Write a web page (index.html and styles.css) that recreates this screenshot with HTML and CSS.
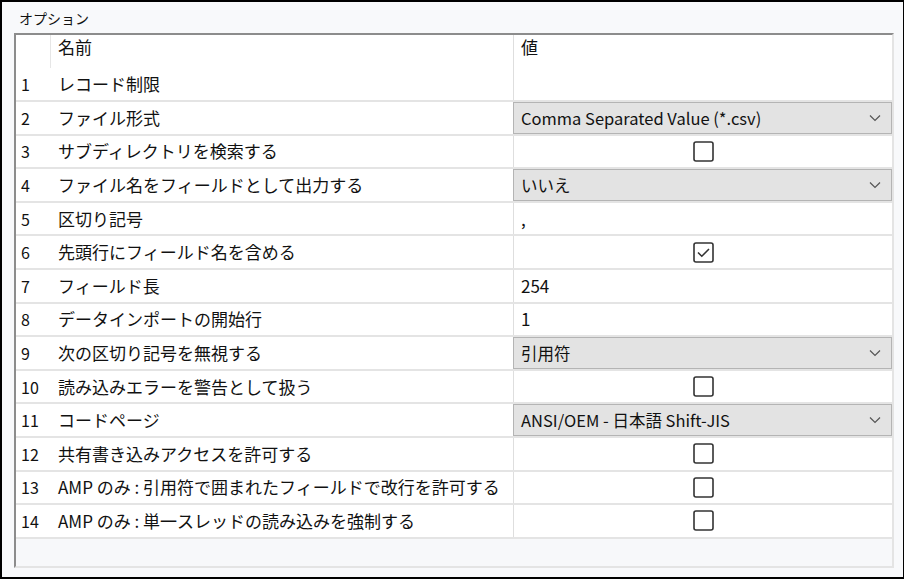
FILE: index.html
```html
<!DOCTYPE html>
<html lang="ja">
<head>
<meta charset="utf-8">
<title>オプション</title>
<link rel="stylesheet" href="styles.css">
</head>
<body>
<div class="window">
  <div class="title">オプション</div>
  <div class="grid">
    <div class="row head">
      <div class="num"></div>
      <div class="name">名前</div>
      <div class="val">値</div>
    </div>
    <div class="row first">
      <div class="num">1</div>
      <div class="name">レコード制限</div>
      <div class="val"></div>
    </div>
    <div class="row">
      <div class="num">2</div>
      <div class="name">ファイル形式</div>
      <div class="val combo"><span>Comma Separated Value (*.csv)</span><svg class="chev" width="12" height="8" viewBox="0 0 12 8"><path d="M1 1.5 L6 6.5 L11 1.5" fill="none" stroke="#555" stroke-width="1.2"/></svg></div>
    </div>
    <div class="row">
      <div class="num">3</div>
      <div class="name">サブディレクトリを検索する</div>
      <div class="val check"><svg width="21" height="21" viewBox="0 0 21 21"><rect x="1" y="1" width="19" height="19" rx="2" fill="#fff" stroke="#333" stroke-width="1.6"/></svg></div>
    </div>
    <div class="row">
      <div class="num">4</div>
      <div class="name">ファイル名をフィールドとして出力する</div>
      <div class="val combo"><span>いいえ</span><svg class="chev" width="12" height="8" viewBox="0 0 12 8"><path d="M1 1.5 L6 6.5 L11 1.5" fill="none" stroke="#555" stroke-width="1.2"/></svg></div>
    </div>
    <div class="row">
      <div class="num">5</div>
      <div class="name">区切り記号</div>
      <div class="val">,</div>
    </div>
    <div class="row">
      <div class="num">6</div>
      <div class="name">先頭行にフィールド名を含める</div>
      <div class="val check"><svg width="21" height="21" viewBox="0 0 21 21"><rect x="1" y="1" width="19" height="19" rx="2" fill="#fff" stroke="#333" stroke-width="1.6"/><path d="M5 10.5 L8.8 14.2 L16 7" fill="none" stroke="#333" stroke-width="1.6"/></svg></div>
    </div>
    <div class="row">
      <div class="num">7</div>
      <div class="name">フィールド長</div>
      <div class="val">254</div>
    </div>
    <div class="row">
      <div class="num">8</div>
      <div class="name">データインポートの開始行</div>
      <div class="val">1</div>
    </div>
    <div class="row">
      <div class="num">9</div>
      <div class="name">次の区切り記号を無視する</div>
      <div class="val combo"><span>引用符</span><svg class="chev" width="12" height="8" viewBox="0 0 12 8"><path d="M1 1.5 L6 6.5 L11 1.5" fill="none" stroke="#555" stroke-width="1.2"/></svg></div>
    </div>
    <div class="row">
      <div class="num">10</div>
      <div class="name">読み込みエラーを警告として扱う</div>
      <div class="val check"><svg width="21" height="21" viewBox="0 0 21 21"><rect x="1" y="1" width="19" height="19" rx="2" fill="#fff" stroke="#333" stroke-width="1.6"/></svg></div>
    </div>
    <div class="row">
      <div class="num">11</div>
      <div class="name">コードページ</div>
      <div class="val combo"><span>ANSI/OEM - 日本語 Shift-JIS</span><svg class="chev" width="12" height="8" viewBox="0 0 12 8"><path d="M1 1.5 L6 6.5 L11 1.5" fill="none" stroke="#555" stroke-width="1.2"/></svg></div>
    </div>
    <div class="row">
      <div class="num">12</div>
      <div class="name">共有書き込みアクセスを許可する</div>
      <div class="val check"><svg width="21" height="21" viewBox="0 0 21 21"><rect x="1" y="1" width="19" height="19" rx="2" fill="#fff" stroke="#333" stroke-width="1.6"/></svg></div>
    </div>
    <div class="row">
      <div class="num">13</div>
      <div class="name">AMP のみ : 引用符で囲まれたフィールドで改行を許可する</div>
      <div class="val check"><svg width="21" height="21" viewBox="0 0 21 21"><rect x="1" y="1" width="19" height="19" rx="2" fill="#fff" stroke="#333" stroke-width="1.6"/></svg></div>
    </div>
    <div class="row">
      <div class="num">14</div>
      <div class="name">AMP のみ : 単一スレッドの読み込みを強制する</div>
      <div class="val check"><svg width="21" height="21" viewBox="0 0 21 21"><rect x="1" y="1" width="19" height="19" rx="2" fill="#fff" stroke="#333" stroke-width="1.6"/></svg></div>
    </div>
    <div class="filler"></div>
  </div>
</div>
</body>
</html>
```
FILE: styles.css
```css
html, body {
  margin: 0;
  padding: 0;
}
body {
  font-family: "Noto Sans CJK JP", "Noto Sans", sans-serif;
  color: #111;
  background: #000;
}
.window {
  width: 904px;
  height: 579px;
  box-sizing: border-box;
  border: 2px solid #000;
  border-right-width: 1px;
  background: #f8f9fb;
  display: flex;
  flex-direction: column;
}
.title {
  height: 31px;
  box-sizing: border-box;
  padding: 6px 0 0 17px;
  font-size: 14px;
  line-height: 20px;
  color: #111;
}
.grid {
  margin-left: 12px;
  width: 880px;
  height: 535px;
  box-sizing: border-box;
  border-top: 2px solid #8c8c8c;
  border-left: 2px solid #8c8c8c;
  border-right: 2px solid #e4e4e4;
  border-bottom: 2px solid #e4e4e4;
  display: flex;
  flex-direction: column;
}
.row {
  display: grid;
  grid-template-columns: 35px 462px 1fr;
  height: 33.6px;
  box-sizing: border-box;
  background: #fff;
  border-bottom: 2px solid #e4e4e4;
  font-size: 17px;
  line-height: 20px;
}
.row.head {
  height: 33px;
  border-bottom: none;
}
.row.first {
  height: 34px;
}
.num {
  padding-left: 5px;
  display: flex;
  align-items: center;
  font-size: 16px;
}
.name {
  padding-left: 7px;
  display: flex;
  align-items: center;
  white-space: nowrap;
}
.val {
  padding-left: 7px;
  display: flex;
  align-items: center;
  border-left: 1px solid #dedede;
  white-space: nowrap;
}
.head .num {
  border-right: 1px solid #e6e6e6;
}
.head .name, .head .val {
  align-items: flex-start;
  padding-top: 2px;
}
.val.combo {
  background: #e3e3e3;
  border: 1px solid #b4b4b4;
  justify-content: space-between;
  padding-right: 10px;
  font-size: 16.5px;
}
.chev {
  flex: none;
}
.val.check {
  justify-content: center;
  padding-left: 0;
  padding-right: 0;
}
.val.check svg {
  display: block;
}
.filler {
  flex: 1;
  background: #f7f8fa;
}
```
